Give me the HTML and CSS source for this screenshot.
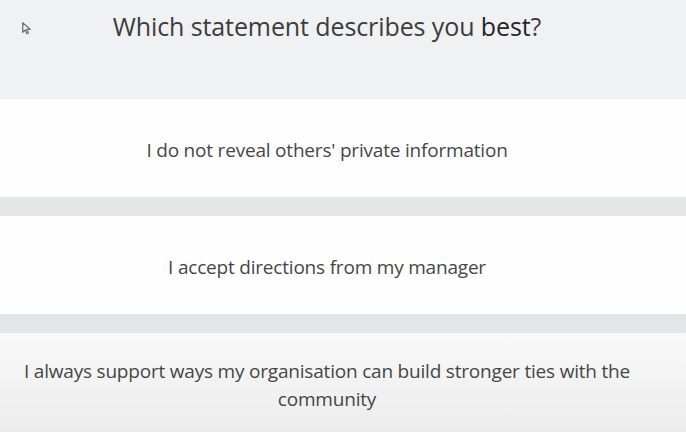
FILE: index.html
```html
<!DOCTYPE html>
<html>
<head>
<meta charset="utf-8">
<link rel="stylesheet" href="styles.css">
</head>
<body>
<div class="page">
  <header class="question">
    <h1 class="title">Which statement describes you <span class="strong">best</span>?</h1>
    <svg class="cursor" width="11" height="14" viewBox="0 0 10 13">
      <path d="M1.5 1.5 L1.5 10.5 L3.8 8.4 L5.4 11.8 L6.8 11.1 L5.3 7.8 L8.5 7.8 Z" fill="#f4f4f4" stroke="#707070" stroke-width="1.2" stroke-linejoin="round"/>
    </svg>
  </header>
  <div class="options">
    <div class="option"><span class="label">I do not reveal others' private information</span></div>
    <div class="option"><span class="label">I accept directions from my manager</span></div>
    <div class="option hover"><span class="label">I always support ways my organisation can build stronger ties with the community</span></div>
  </div>
</div>
</body>
</html>
```
FILE: styles.css
```css
html, body {
  margin: 0;
  padding: 0;
  background: #eff1f3;
  font-family: "Open Sans", "Liberation Sans", sans-serif;
  overflow: hidden;
}
.page {
  width: 686px;
  height: 432px;
  display: flex;
  flex-direction: column;
}
.question {
  position: relative;
  height: 99px;
  display: flex;
  justify-content: center;
  padding-right: 32px;
}
.title {
  margin: 9px 0 0 0;
  font-size: 25px;
  font-weight: 400;
  color: #3c3c3c;
  line-height: 34px;
  letter-spacing: -0.1px;
}
.strong {
  font-weight: 500;
  color: #262626;
}
.cursor {
  position: absolute;
  left: 21px;
  top: 21px;
}
.options {
  display: flex;
  flex-direction: column;
  gap: 19px;
  background: #e4e5e7;
  flex: 1;
}
.option {
  background: #fefefe;
  height: 98px;
  display: flex;
  align-items: center;
  justify-content: center;
  padding: 4px 32px 0 0;
  box-sizing: border-box;
  text-align: center;
  font-size: 19px;
  color: #464646;
  line-height: 28px;
  letter-spacing: -0.2px;
}
.option.hover {
  flex: 1;
  align-items: flex-start;
  padding-top: 24px;
  background: linear-gradient(#f9f9f9, #ececec);
}
```
